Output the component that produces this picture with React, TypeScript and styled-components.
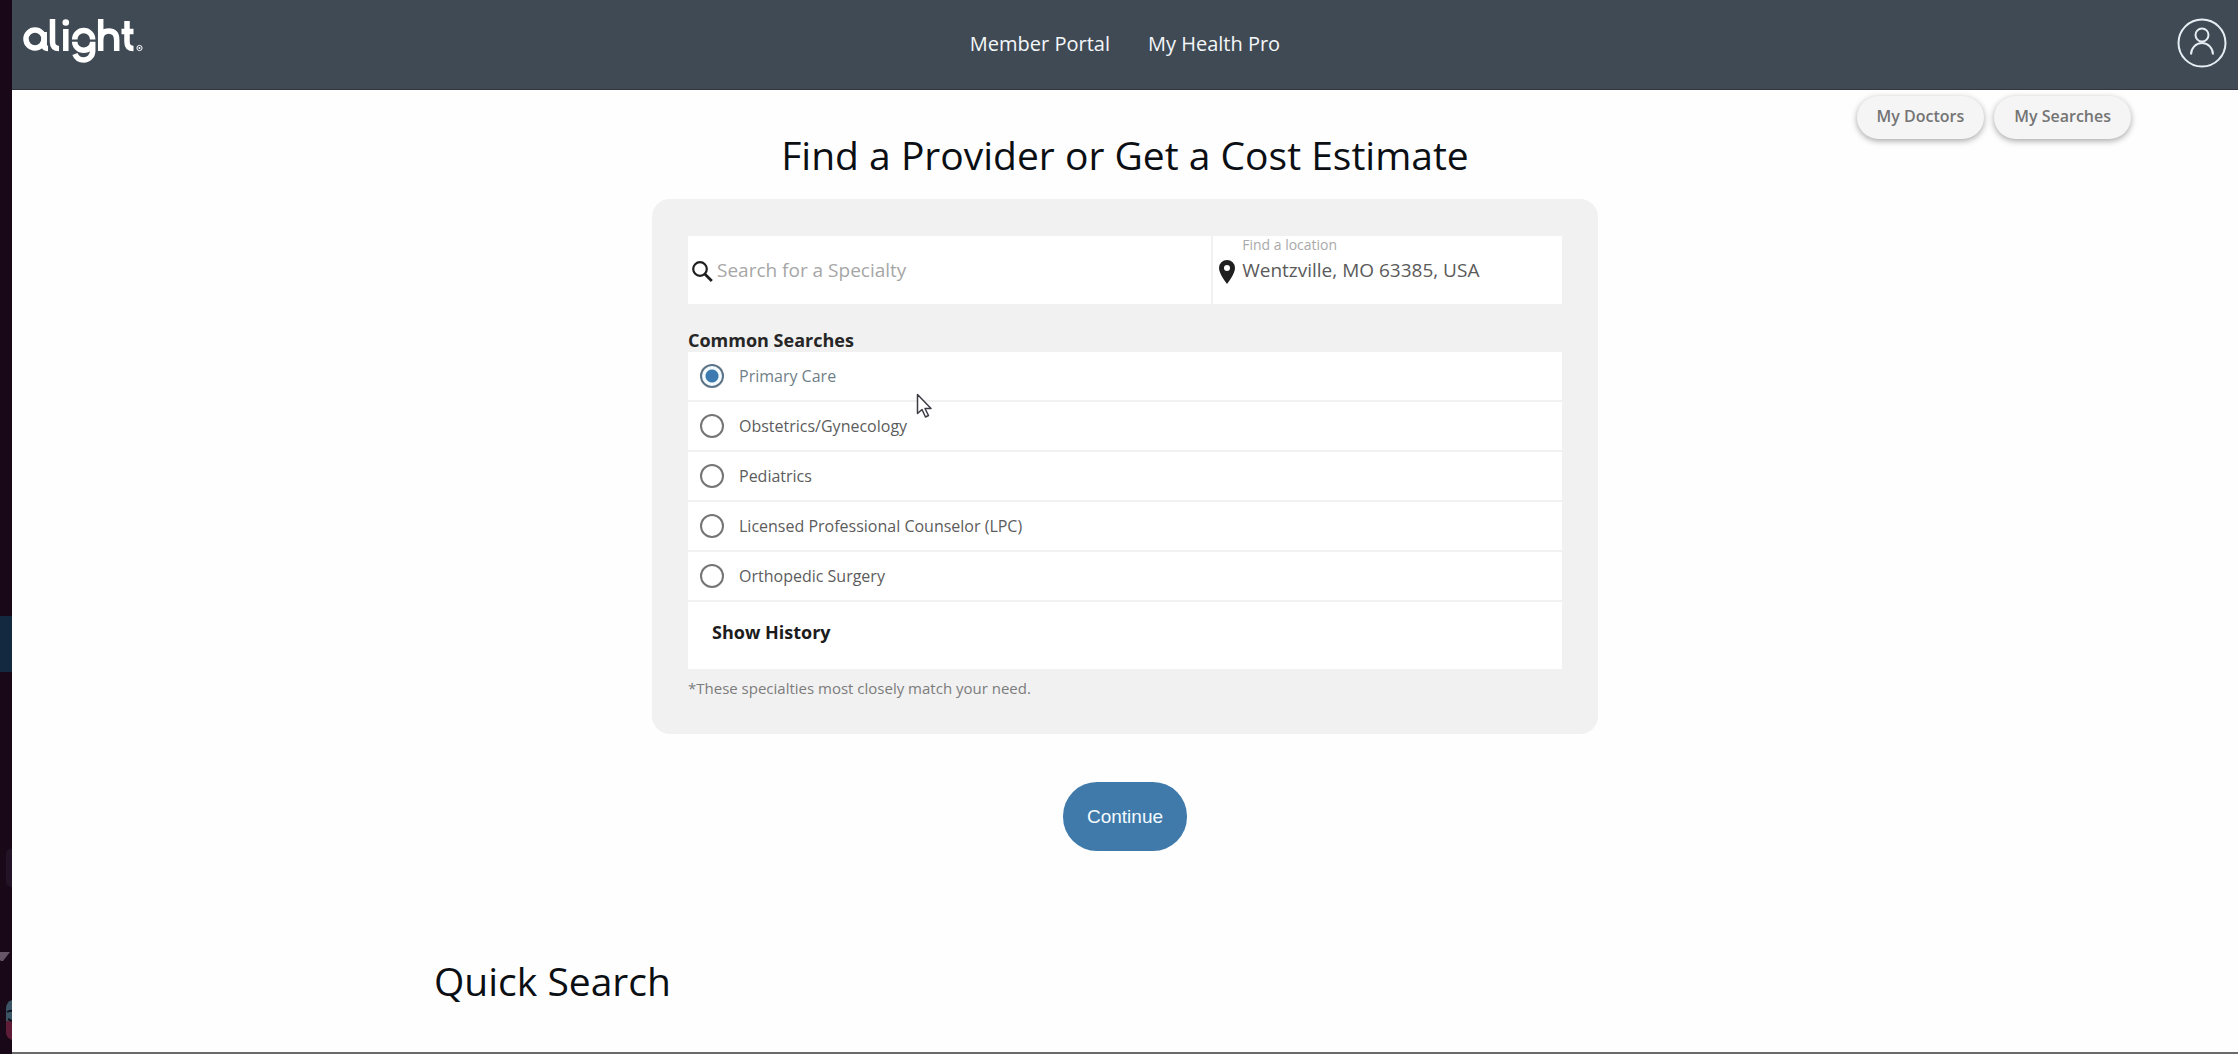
import React, { useState } from "react";
import styled, { createGlobalStyle } from "styled-components";

const GlobalStyle = createGlobalStyle`
  *, *::before, *::after { box-sizing: border-box; }
  body {
    margin: 0;
    background: #fefefe;
    color: #0b0f14;
    font-family: "Open Sans", "Noto Sans", sans-serif;
  }
  button, input { font-family: inherit; }
`;

const Page = styled.div`
  display: grid;
  grid-template-columns: 12px minmax(0, 1fr);
  min-height: 100vh;
`;

const Rail = styled.aside`
  display: flex;
  flex-direction: column;
  justify-content: flex-end;
  background: #180818;
`;

const RailActive = styled.div`
  height: 56px;
  background: #13293f;
`;

const RailArt = styled.svg`
  display: block;
  width: 12px;
  height: 382px;
`;

const Content = styled.div`
  display: flex;
  flex-direction: column;
  border-bottom: 2px solid #6a6a6a;
`;

const Header = styled.header`
  display: grid;
  grid-template-columns: 1fr auto 1fr;
  align-items: center;
  height: 90px;
  padding: 0 11px;
  background: #404a54;
  border-bottom: 1px solid #35353f;
`;

const LogoLink = styled.a`
  justify-self: start;
  display: block;
  height: 48px;
  margin-bottom: 8px;
`;

const Nav = styled.nav`
  display: flex;
  gap: 38px;
  padding-bottom: 2px;
`;

const NavLink = styled.a`
  color: #f4f7fa;
  font-size: 20px;
  line-height: 28px;
  text-decoration: none;
`;

const ProfileButton = styled.button`
  justify-self: end;
  display: block;
  width: 50px;
  height: 50px;
  margin-bottom: 4px;
  padding: 0;
  border: 0;
  background: none;
`;

const Shortcuts = styled.div`
  display: flex;
  justify-content: flex-end;
  gap: 10px;
  padding: 6px 107px 0 0;
`;

const Pill = styled.button`
  height: 43px;
  padding: 0 20px 3px;
  border: 0;
  border-radius: 22px;
  background: #f5f5f5;
  box-shadow: 0 2px 6px rgba(0, 0, 0, 0.35);
  color: #747474;
  font-size: 16px;
  font-weight: 600;
`;

const Main = styled.main`
  display: flex;
  flex-direction: column;
  align-items: center;
`;

const Title = styled.h1`
  margin: 0;
  padding-bottom: 28px;
  font-size: 39px;
  line-height: 32px;
  font-weight: 400;
`;

const Card = styled.form`
  width: 100%;
  max-width: 946px;
  padding: 37px 36px 27px;
  border-radius: 18px;
  background: #f1f1f1;
`;

const SearchRow = styled.div`
  display: grid;
  grid-template-columns: 3fr 2fr;
  gap: 2px;
`;

const Field = styled.div`
  display: grid;
  grid-template-columns: auto 1fr;
  grid-template-rows: 18px 32px 18px;
  align-items: center;
  column-gap: 4px;
  padding-left: 4px;
  background: #fff;

  svg { grid-area: 2 / 1; display: block; }
  label { grid-area: 1 / 2; }
  input { grid-area: 2 / 2; }
`;

const FieldLabel = styled.label`
  color: #a9a9a9;
  font-size: 14px;
  line-height: 18px;
`;

const TextInput = styled.input`
  width: 100%;
  height: 32px;
  padding: 0;
  border: 0;
  outline: 0;
  background: transparent;
  color: #5a5a5a;
  font-size: 19px;

  &::placeholder { color: #a6a6a6; opacity: 1; }
`;

const Searches = styled.fieldset`
  margin: 0;
  padding: 24px 0 0;
  border: 0;
  min-width: 0;
`;

const SectionLabel = styled.legend`
  float: left;
  width: 100%;
  padding: 0;
  color: #262626;
  font-size: 18px;
  line-height: 24px;
  font-weight: 700;
`;

const Options = styled.div`
  clear: both;
  display: flex;
  flex-direction: column;
  gap: 2px;
`;

const Option = styled.label`
  display: flex;
  align-items: center;
  gap: 15px;
  height: 48px;
  padding-left: 12px;
  background: #fff;
  color: ${(p: { $selected: boolean }) => (p.$selected ? "#6f7f88" : "#5c5c5c")};
  font-size: 16px;
`;

const Radio = styled.input`
  appearance: none;
  width: 24px;
  height: 24px;
  margin: 0;
  border: 2px solid #757575;
  border-radius: 50%;
  background: #fff;

  &:checked {
    border-color: #5d7386;
    background: radial-gradient(circle, #3d7ab0 0 6px, #f2fbff 7px);
  }
`;

const HistoryRow = styled.div`
  display: flex;
  align-items: center;
  height: 67px;
  padding: 0 24px 8px;
  background: #fff;
`;

const HistoryButton = styled.button`
  padding: 0;
  border: 0;
  background: none;
  color: #1c1c1c;
  font-size: 18px;
  font-weight: 700;
`;

const Note = styled.p`
  margin: 0;
  padding: 8px 0;
  color: #7c7c7c;
  font-size: 15px;
  line-height: 22px;
`;

const ContinueButton = styled.button`
  height: 69px;
  margin-top: 48px;
  padding: 0 24px;
  border: 0;
  border-radius: 34px;
  background: #3f7aab;
  color: #f3fbff;
  font-family: "Liberation Sans", Arial, sans-serif;
  font-size: 19px;
`;

const QuickSearch = styled.section`
  width: 100%;
  max-width: 1382px;
  padding-top: 108px;
`;

const QuickTitle = styled.h2`
  margin: 0;
  font-size: 39px;
  line-height: 44px;
  font-weight: 400;
`;

const Pointer = styled.svg`
  position: absolute;
  left: 916px;
  top: 393px;
  width: 17px;
  height: 26px;
  pointer-events: none;
`;

const AlightLogo = () => (
  <svg width="122" height="48" viewBox="0 0 122 48" fill="none" stroke="#fff" strokeWidth="5.500" aria-hidden="true">
    <circle cx="12" cy="22" r="9" />
    <path d="M21.200 15v13q0 3.500 3.800 3.500" />
    <path d="M29.500 2v23q0 6.500 6.500 6.500" />
    <path d="M42.800 12v22" />
    <circle cx="42.800" cy="5.500" r="3.300" fill="#fff" stroke="none" />
    <path d="M51.700 22.500a9 9 0 0 1 18 0" />
    <path d="M51.700 24.800a9 8.500 0 0 0 18 0v9.200a9 9 0 0 1-9 9q-6.500 0-8.800-6" />
    <path d="M77.700 2v32M77.700 23q0-9 8-9t8 9v11" />
    <path d="M104 4v21q0 6.500 6.500 6.500M98.500 14.500h12" />
    <circle cx="116.500" cy="31" r="2.600" strokeWidth="1" />
    <circle cx="116.500" cy="31" r="1" fill="#fff" stroke="none" />
  </svg>
);

const ProfileIcon = () => (
  <svg width="50" height="50" viewBox="0 0 50 50" fill="none" stroke="#e6edf3" strokeWidth="2" aria-hidden="true">
    <circle cx="25" cy="25" r="23.500" />
    <circle cx="25" cy="17" r="6.500" />
    <path d="M14 36.500a11 11.500 0 0 1 22 0" />
  </svg>
);

const SearchIcon = () => (
  <svg width="21" height="26" viewBox="0 -4 21 26" fill="none" stroke="#1f1f1f" aria-hidden="true">
    <circle cx="8" cy="8" r="6.800" strokeWidth="2.200" />
    <path d="M12.800 13l7 7" strokeWidth="2.800" />
  </svg>
);

const PinIcon = () => (
  <svg width="21" height="28" viewBox="1 -4 21 28" aria-hidden="true">
    <path
      d="M11 0a8 8 0 0 0-8 8c0 6 8 16 8 16s8-10 8-16a8 8 0 0 0-8-8zm0 11a3 3 0 1 1 0-6 3 3 0 0 1 0 6z"
      fill="#1f1f1f"
    />
  </svg>
);

const specialties = [
  "Primary Care",
  "Obstetrics/Gynecology",
  "Pediatrics",
  "Licensed Professional Counselor (LPC)",
  "Orthopedic Surgery",
];

export default function App() {
  const [selected, setSelected] = useState(specialties[0]);
  const [location, setLocation] = useState("Wentzville, MO 63385, USA");

  return (
    <>
      <GlobalStyle />
      <Page>
        <Rail aria-hidden="true">
          <RailActive />
          <RailArt viewBox="0 0 12 382">
            <rect x="6" y="177" width="14" height="38" rx="5" fill="#231326" />
            <path d="M0 280h10l-7 9h-2l-1-1z" fill="#675667" />
            <path d="M12 328q-6 2-6 9v12h6z" fill="#3c5564" />
            <path d="M6 349h6v19q-6-2-6-8z" fill="#5e1c37" />
            <path d="M7 340q3-2 5-1M8 347l4 2" stroke="#0d1420" strokeWidth="2" />
          </RailArt>
        </Rail>
        <Content>
          <Header>
            <LogoLink href="#" aria-label="alight">
              <AlightLogo />
            </LogoLink>
            <Nav>
              <NavLink href="#">Member Portal</NavLink>
              <NavLink href="#">My Health Pro</NavLink>
            </Nav>
            <ProfileButton type="button" aria-label="Profile">
              <ProfileIcon />
            </ProfileButton>
          </Header>
          <Shortcuts>
            <Pill type="button">My Doctors</Pill>
            <Pill type="button">My Searches</Pill>
          </Shortcuts>
          <Main>
            <Title>Find a Provider or Get a Cost Estimate</Title>
            <Card id="provider-search" onSubmit={(e) => e.preventDefault()}>
              <SearchRow>
                <Field>
                  <SearchIcon />
                  <TextInput type="text" aria-label="Search for a Specialty" placeholder="Search for a Specialty" />
                </Field>
                <Field>
                  <FieldLabel htmlFor="location">Find a location</FieldLabel>
                  <PinIcon />
                  <TextInput id="location" type="text" value={location} onChange={(e) => setLocation(e.target.value)} />
                </Field>
              </SearchRow>
              <Searches>
                <SectionLabel>Common Searches</SectionLabel>
                <Options>
                  {specialties.map((name) => (
                    <Option key={name} $selected={selected === name}>
                      <Radio
                        type="radio"
                        name="specialty"
                        value={name}
                        checked={selected === name}
                        onChange={() => setSelected(name)}
                      />
                      {name}
                    </Option>
                  ))}
                  <HistoryRow>
                    <HistoryButton type="button">Show History</HistoryButton>
                  </HistoryRow>
                </Options>
              </Searches>
              <Note>*These specialties most closely match your need.</Note>
            </Card>
            <ContinueButton type="submit" form="provider-search">
              Continue
            </ContinueButton>
            <QuickSearch>
              <QuickTitle>Quick Search</QuickTitle>
            </QuickSearch>
          </Main>
        </Content>
      </Page>
      <Pointer viewBox="0 0 17 26" aria-hidden="true">
        <path
          d="M1.500 1.500v19l4.500-4 3.500 7.500 3-1.500-3.500-7h6z"
          fill="#fff"
          stroke="#3c3c44"
          strokeWidth="1.500"
          strokeLinejoin="round"
        />
      </Pointer>
    </>
  );
}
